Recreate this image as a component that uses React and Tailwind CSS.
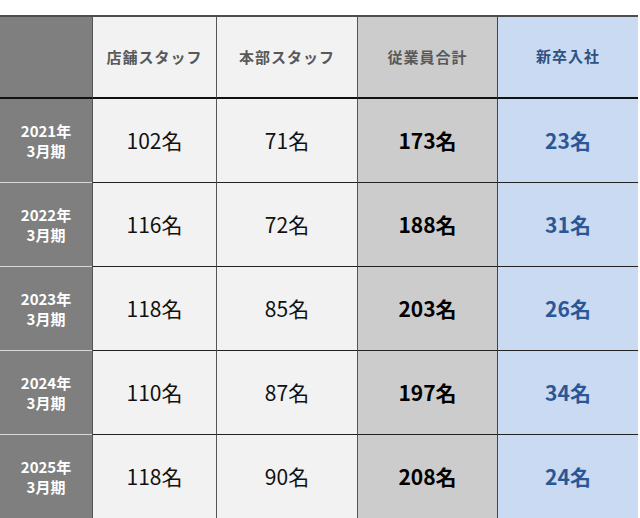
import React from 'react';

const rows = [
  { year: '2021年', store: '102名', hq: '71名', total: '173名', fresh: '23名' },
  { year: '2022年', store: '116名', hq: '72名', total: '188名', fresh: '31名' },
  { year: '2023年', store: '118名', hq: '85名', total: '203名', fresh: '26名' },
  { year: '2024年', store: '110名', hq: '87名', total: '197名', fresh: '34名' },
  { year: '2025年', store: '118名', hq: '90名', total: '208名', fresh: '24名' },
];

const font = { fontFamily: '"Noto Sans CJK JP", "Noto Sans", sans-serif' };

const App = () => {
  return (
    <div className="w-[640px] h-[518px] bg-white pt-[15px] overflow-hidden" style={font}>
      <div className="w-[638px] grid grid-cols-[92px_124px_141px_140px_141px] border-t-2 border-[#4d4d4d]">
        {/* ヘッダー */}
        <div className="h-[82px] bg-[#7f7f7f] border-b-2 border-[#111]" />
        <div className="h-[82px] bg-[#f2f2f2] border-l-[1.5px] border-b-2 border-l-[#555] border-b-[#111] flex items-center justify-center">
          <span className="text-[15px] font-bold text-[#595959] tracking-[1px]">店舗スタッフ</span>
        </div>
        <div className="h-[82px] bg-[#f2f2f2] border-l-[1.5px] border-b-2 border-l-[#555] border-b-[#111] flex items-center justify-center">
          <span className="text-[15px] font-bold text-[#595959] tracking-[1px]">本部スタッフ</span>
        </div>
        <div className="h-[82px] bg-[#cccccc] border-l-[1.5px] border-b-2 border-l-[#555] border-b-[#111] flex items-center justify-center">
          <span className="text-[15px] font-bold text-[#595959] tracking-[1px]">従業員合計</span>
        </div>
        <div className="h-[82px] bg-[#c9daf2] border-l-[1.5px] border-b-2 border-l-[#444] border-b-[#111] flex items-center justify-center pb-[2px]">
          <span className="text-[15px] font-bold text-[#2f4f7f] tracking-[1px]">新卒入社</span>
        </div>

        {rows.map((r, i) => (
          <React.Fragment key={r.year}>
            <div className="h-[84px] bg-[#7f7f7f] border-b-[1.5px] border-[#d9d9d9] flex flex-col items-center justify-center text-white font-bold text-[15px] leading-[20px]">
              <span>{r.year}</span>
              <span>3月期</span>
            </div>
            <div className="h-[84px] bg-[#f2f2f2] border-l-[1.5px] border-b-[1.5px] border-l-[#555] border-b-[#222] flex items-center justify-center">
              <span className="text-[21px] text-[#111]">{r.store}</span>
            </div>
            <div className="h-[84px] bg-[#f2f2f2] border-l-[1.5px] border-b-[1.5px] border-l-[#555] border-b-[#222] flex items-center justify-center">
              <span className="text-[21px] text-[#111]">{r.hq}</span>
            </div>
            <div className="h-[84px] bg-[#cccccc] border-l-[1.5px] border-b-[1.5px] border-l-[#555] border-b-[#222] flex items-center justify-center">
              <span className="text-[21px] font-bold text-black">{r.total}</span>
            </div>
            <div className="h-[84px] bg-[#c9daf2] border-l-[1.5px] border-b-[1.5px] border-l-[#444] border-b-[#222] flex items-center justify-center">
              <span className="text-[21px] font-bold text-[#2b5797]">{r.fresh}</span>
            </div>
          </React.Fragment>
        ))}
      </div>
    </div>
  );
};

export default App;
